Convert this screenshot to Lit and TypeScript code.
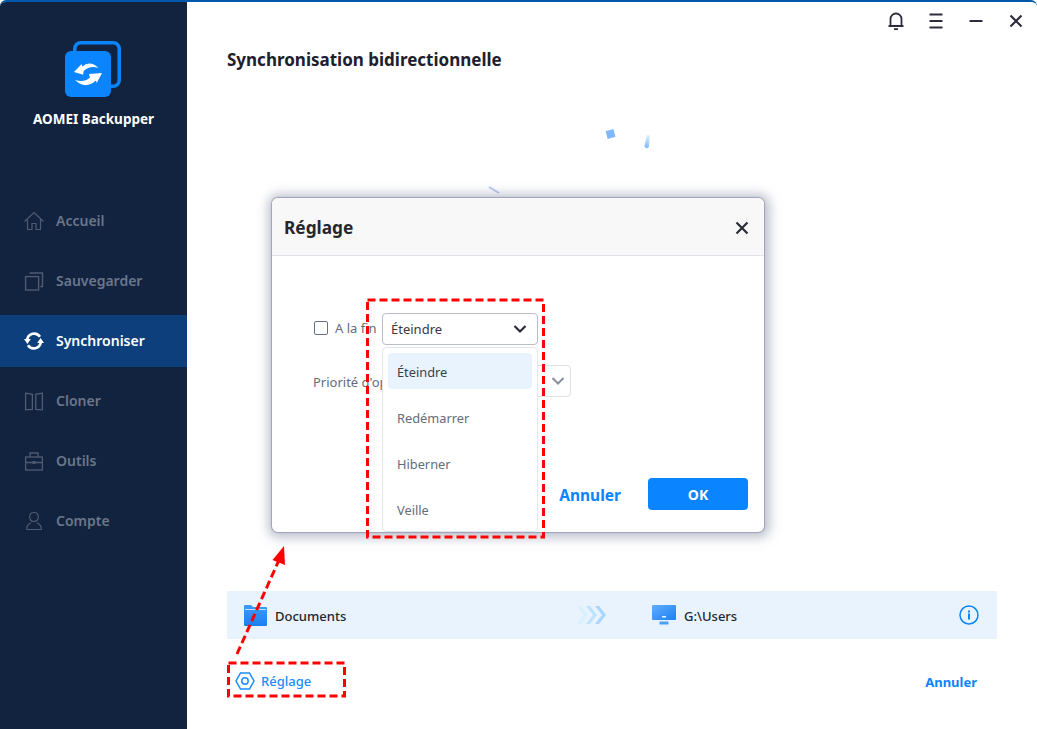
import { LitElement, html, css, svg } from "lit";
import { customElement } from "lit/decorators.js";

const syncIcon = svg`<path d="M16 5.800A7 7 0 0 0 3.200 8.800" fill="none" stroke="currentColor" stroke-width="2.600"/><path d="M0 8h6.800l-3.400 5z" fill="currentColor"/><path d="M4 14.200A7 7 0 0 0 16.800 11.200" fill="none" stroke="currentColor" stroke-width="2.600"/><path d="M20 12h-6.800l3.400-5z" fill="currentColor"/>`;

const navIcons: Record<string, unknown> = {
  Accueil: svg`<path d="M.5 10.500 10 1.500l9.500 9M3.500 8.500V18.500h4.500v-6h4v6h4.500V8.500" fill="none" stroke="currentColor" stroke-width="1.200"/>`,
  Sauvegarder: svg`<rect x="1.600" y="5.600" width="13" height="13.400" fill="none" stroke="currentColor" stroke-width="1.400"/><path d="M5.500 2h13v13.500h-2.200" fill="none" stroke="currentColor" stroke-width="1.400"/>`,
  Synchroniser: syncIcon,
  Cloner: svg`<path d="M1.600 2.200 8.400 3.400v15l-6.800.4zM18.400 2.200 11.800 3.400v15l6.600.4z" fill="none" stroke="currentColor" stroke-width="1.300"/>`,
  Outils: svg`<rect x="1.600" y="6" width="16.800" height="13" fill="none" stroke="currentColor" stroke-width="1.300"/><path d="M6 6V2h8v4M1.600 11.500h16.800" fill="none" stroke="currentColor" stroke-width="1.300"/><rect x="8.500" y="10" width="3" height="3" fill="currentColor"/>`,
  Compte: svg`<path d="M10 1.500c3 0 4.300 1.600 4.300 4 0 3-1.900 5-4.300 5s-4.300-2-4.300-5c0-2.400 1.300-4 4.300-4M2.500 18.500c0-3.600 1.800-5.700 4.700-6.800M17.500 18.500c0-3.600-1.800-5.700-4.700-6.800M2.500 18.500h15" fill="none" stroke="currentColor" stroke-width="1.200"/>`,
};
const navItems = ["Accueil", "Sauvegarder", "Synchroniser", "Cloner", "Outils", "Compte"];
const options = ["Éteindre", "Redémarrer", "Hiberner", "Veille"];

@customElement("app-root")
export class AppRoot extends LitElement {
  static styles = css`
    :host { display: block; }
    * { box-sizing: border-box; }
    .window {
      position: relative; width: 1037px; height: 729px; display: flex; overflow: hidden;
      background: #fff; border-top: 2px solid #0058ad; border-radius: 6px 6px 0 0;
      font-family: "Noto Sans", "Open Sans", sans-serif; color: #2b2b38;
    }
    .side { width: 187px; flex: none; background: #12233f; display: flex; flex-direction: column; }
    .brand { display: flex; flex-direction: column; align-items: center; padding-top: 38px; height: 192px; }
    .logo { width: 58px; height: 58px; display: block; margin-left: 1px; }
    .brand-name { margin-top: 11px; color: #fff; font-weight: 700; font-size: 13.500px; line-height: 20px; }
    .nav { display: flex; flex-direction: column; gap: 8px; padding-top: 1px; }
    .item { height: 52px; display: flex; align-items: center; gap: 12px; padding-left: 24px; color: #6b7689; font-weight: 600; font-size: 14px; }
    .item span { padding-bottom: 2px; }
    .item svg { width: 20px; height: 20px; flex: none; color: #4f5b72; }
    .item.on { background: #0c3f7c; color: #fff; }
    .item.on svg { color: #fff; }
    .main { flex: 1; min-width: 0; display: flex; flex-direction: column; padding: 0 40px; }
    .chrome { height: 38px; display: flex; justify-content: flex-end; align-items: center; margin-right: -40px; padding-right: 9px; gap: 16px; color: #2f2b3c; }
    .chrome svg { width: 24px; height: 24px; }
    h1 { margin: 8px 0 0; font-size: 17px; line-height: 24px; font-weight: 700; color: #20202c; }
    .spacer { flex: 1; }
    .bar { height: 48px; background: #e8f3fd; display: flex; align-items: center; padding-left: 17px; padding-right: 18px; font-size: 13px; font-weight: 500; color: #25252f; }
    .bar span { padding-top: 2px; }
    .side-a { width: 333px; display: flex; align-items: center; gap: 8px; }
    .side-b { flex: 1; display: flex; align-items: center; gap: 8px; }
    .bar svg { flex: none; display: block; }
    .arrows { width: 75px; }
    .foot { height: 90px; display: flex; justify-content: space-between; align-items: flex-start; padding-top: 31px; padding-right: 20px; }
    .set { display: flex; align-items: center; gap: 6px; padding-left: 8px; color: #1a8cff; font-size: 13px; font-weight: 500; line-height: 22px; }
    .cancel { color: #0a84ff; font-size: 13px; font-weight: 700; line-height: 22px; padding-top: 1px; }
    .deco { position: absolute; fill: #7db8ff; }
    .modal {
      position: absolute; left: 272px; top: 196px; width: 492px; height: 334px; background: #fff; border-radius: 6px;
      box-shadow: 0 0 1px 1px #9da3b5, 1px 1px 11px 5px rgba(140,146,170,.55);
      display: flex; flex-direction: column;
    }
    .m-head { height: 58px; flex: none; background: #f8f8f8; border-bottom: 1px solid #e1e3ea; border-radius: 6px 6px 0 0; display: flex; align-items: center; justify-content: space-between; padding: 2px 14px 0 12px; }
    .m-head b { font-size: 17.300px; color: #26262f; font-weight: 700; }
    .m-body { flex: 1; position: relative; padding: 56px 0 0 41px; font-size: 13px; color: #666b7a; }
    .line { display: flex; align-items: center; height: 32px; }
    .check { width: 14px; height: 14px; border: 1.500px solid #6b7080; border-radius: 2px; margin: 0 7px 0 1px; }
    .select { position: absolute; left: 110px; top: 57px; width: 156px; height: 32px; background: #fff; border: 1px solid #b9bdc9; border-radius: 4px; display: flex; align-items: center; justify-content: space-between; padding: 0 10px 0 8px; color: #383844; }
    .select2 { position: absolute; left: 250px; top: 109px; width: 49px; height: 32px; background: #fff; border: 1px solid #dfe1e8; border-radius: 0 4px 4px 0; display: flex; align-items: center; justify-content: flex-end; padding-right: 5px; }
    .menu { position: absolute; left: 110px; top: 91px; width: 156px; height: 185px; background: #fff; border: 1px solid #e3e5ea; border-radius: 4px; padding: 5px; display: flex; flex-direction: column; z-index: 2; }
    .opt { height: 36px; margin-bottom: 10px; padding: 2px 0 0 9px; display: flex; align-items: center; border-radius: 4px; color: #666b7a; font-size: 12.800px; flex: none; }
    .opt.on { background: #e8f3fd; color: #3d3d4a; }
    .prio { margin-top: 22px; }
    .actions { position: absolute; right: 16px; bottom: 22px; display: flex; align-items: center; gap: 27px; }
    .actions .a { color: #0a84ff; font-weight: 700; font-size: 15.500px; padding-top: 2px; }
    .ok { width: 100px; height: 32px; background: #0a84ff; color: #fff; border-radius: 4px; display: flex; align-items: center; justify-content: center; font-weight: 700; font-size: 14px; }
    .marks { position: absolute; left: 0; top: -2px; width: 1037px; height: 729px; pointer-events: none; z-index: 5; }
  `;

  render() {
    return html`<div class="window">
      <aside class="side">
        <div class="brand">
          <svg class="logo" viewBox="0 0 58 58">
            <rect x="9.750" y="2.750" width="44.500" height="43.500" rx="6" fill="none" stroke="#0a84ff" stroke-width="3.500"/>
            <rect x="0" y="11" width="46" height="46" rx="6" fill="#0a84ff"/>
            <path d="M9 32 16.700 24l.6 2.500Q25 20 33.500 28 25 25 18.700 31l-.6 3.800z" fill="#fff"/>
            <path d="M37 33 31.700 43l-.7-2.500Q20 50 10 40q9 3 15-2.500l-1-3.500z" fill="#fff"/>
          </svg>
          <div class="brand-name">AOMEI Backupper</div>
        </div>
        <nav class="nav">
          ${navItems.map(n => html`<div class="item ${n === "Synchroniser" ? "on" : ""}"><svg viewBox="0 0 20 20">${navIcons[n]}</svg><span>${n}</span></div>`)}
        </nav>
      </aside>
      <main class="main">
        <div class="chrome">
          <svg viewBox="0 0 24 24"><path d="M6.500 17V10a5.500 5.500 0 0 1 11 0v7M4.500 17h15" fill="none" stroke="currentColor" stroke-width="1.800"/><path d="M10 20.200h4" stroke="currentColor" stroke-width="1.800"/></svg>
          <svg viewBox="0 0 24 24"><path d="M5.500 5.500h13M5.500 12h13M5.500 18.500h13" stroke="currentColor" stroke-width="2"/></svg>
          <svg viewBox="0 0 24 24"><path d="M5.500 12h13" stroke="currentColor" stroke-width="2"/></svg>
          <svg viewBox="0 0 24 24"><path d="M6.500 6.500l11 11M17.500 6.500l-11 11" stroke="currentColor" stroke-width="2.200"/></svg>
        </div>
        <h1>Synchronisation bidirectionnelle</h1>
        <div class="spacer"></div>
        <div class="bar">
          <div class="side-a">
            <svg width="23" height="21" viewBox="0 0 23 21">
              <defs><linearGradient id="fg" x1="0" y1="0" x2="0" y2="1"><stop offset="0" stop-color="#3f9bfb"/><stop offset="1" stop-color="#1a7ff0"/></linearGradient></defs>
              <path d="M0 1a1 1 0 0 1 1-1h6l2 2h13a1 1 0 0 1 1 1v17a1 1 0 0 1-1 1H1a1 1 0 0 1-1-1z" fill="url(#fg)"/>
              <path d="M1 4.500h21" stroke="#bfe0ff" stroke-width="1"/>
            </svg>
            <span>Documents</span>
          </div>
          <svg class="arrows" height="18" viewBox="0 0 75 18"><path d="M0 0h4l7 9-7 9H0l7-9z" fill="#d8f0ff"/><path d="M0 0h4l7 9-7 9H0l7-9z" fill="#bfe3ff" transform="translate(9)"/><path d="M0 0h4l7 9-7 9H0l7-9z" fill="#a9d6ff" transform="translate(18)"/></svg>
          <div class="side-b">
            <svg width="24" height="20" viewBox="0 0 24 20">
              <defs><linearGradient id="mg" x1="0" y1="0" x2="1" y2="1"><stop offset="0" stop-color="#62adff"/><stop offset="1" stop-color="#1a80f0"/></linearGradient></defs>
              <rect width="24" height="15" rx="1" fill="url(#mg)"/><rect x="10" y="11" width="4" height="1.500" fill="#e8f3fd"/><rect x="7.500" y="16.500" width="9" height="3" fill="#4aa0fb"/>
            </svg>
            <span>G:\\Users</span>
            <span class="spacer"></span>
            <svg width="20" height="20" viewBox="0 0 20 20"><circle cx="10" cy="10" r="9" fill="none" stroke="#0a84ff" stroke-width="1.500"/><rect x="9" y="8.500" width="2" height="6" fill="#0a84ff"/><rect x="9" y="5.500" width="2" height="2" fill="#0a84ff"/></svg>
          </div>
        </div>
        <div class="foot">
          <div class="set">
            <svg width="20" height="20" viewBox="0 0 20 20"><path d="M5.500 2h9l4.500 8-4.500 8h-9L1 10z" fill="none" stroke="#1a8cff" stroke-width="1.500"/><circle cx="10" cy="10" r="3.200" fill="none" stroke="#1a8cff" stroke-width="1.500"/></svg>
            <span>Réglage</span>
          </div>
          <div class="cancel">Annuler</div>
        </div>
      </main>

      <svg class="deco" style="left:605px;top:125px" width="50" height="28" viewBox="0 0 50 28">
        <rect x="1.500" y="3" width="8" height="8" transform="rotate(-15 5.500 7)"/>
        <defs><linearGradient id="cm" x1="0" y1="1" x2=".3" y2="0"><stop offset="0" stop-color="#6fb4fb"/><stop offset="1" stop-color="#d8ecff"/></linearGradient></defs>
        <path d="M39.500 19l2.500-11 3 .5-1 11a2.300 2.300 0 0 1-4.500-.5z" fill="url(#cm)"/>
      </svg>
      <svg class="deco" style="left:488px;top:184px" width="14" height="12" viewBox="0 0 14 12"><path d="M1 1l10 6" stroke="#b6c4ef" stroke-width="2" fill="none"/></svg>

      <section class="modal">
        <div class="m-head">
          <b>Réglage</b>
          <svg width="16" height="16" viewBox="0 0 16 16"><path d="M2.500 2.500l11 11M13.500 2.500l-11 11" stroke="#2b2b38" stroke-width="2.200"/></svg>
        </div>
        <div class="m-body">
          <div class="line"><span class="check"></span><span>A la fin</span></div>
          <div class="select"><span>Éteindre</span>
            <svg width="14" height="10" viewBox="0 0 14 10"><path d="M1.500 2l5.500 5.500L12.500 2" fill="none" stroke="#2b2b38" stroke-width="2.200"/></svg>
          </div>
          <div class="line prio"><span>Priorité d'opération</span></div>
          <div class="select2">
            <svg width="14" height="10" viewBox="0 0 14 10"><path d="M1.500 2l5.500 5.500L12.500 2" fill="none" stroke="#8a8f9d" stroke-width="2"/></svg>
          </div>
          <div class="menu">
            ${options.map((o, i) => html`<div class="opt ${i === 0 ? "on" : ""}">${o}</div>`)}
          </div>
          <div class="actions"><span class="a">Annuler</span><span class="ok">OK</span></div>
        </div>
      </section>

      <svg class="marks" viewBox="0 0 1037 729">
        <g fill="none" stroke="#f00" stroke-width="3" stroke-dasharray="8 4">
          <rect x="367.500" y="300" width="176" height="237"/>
          <rect x="228.500" y="663" width="116" height="33"/>
          <path d="M237 654 279 560"/>
        </g>
        <path d="M284 546 272.500 560 285 565z" fill="#f00"/>
      </svg>
    </div>`;
  }
}
